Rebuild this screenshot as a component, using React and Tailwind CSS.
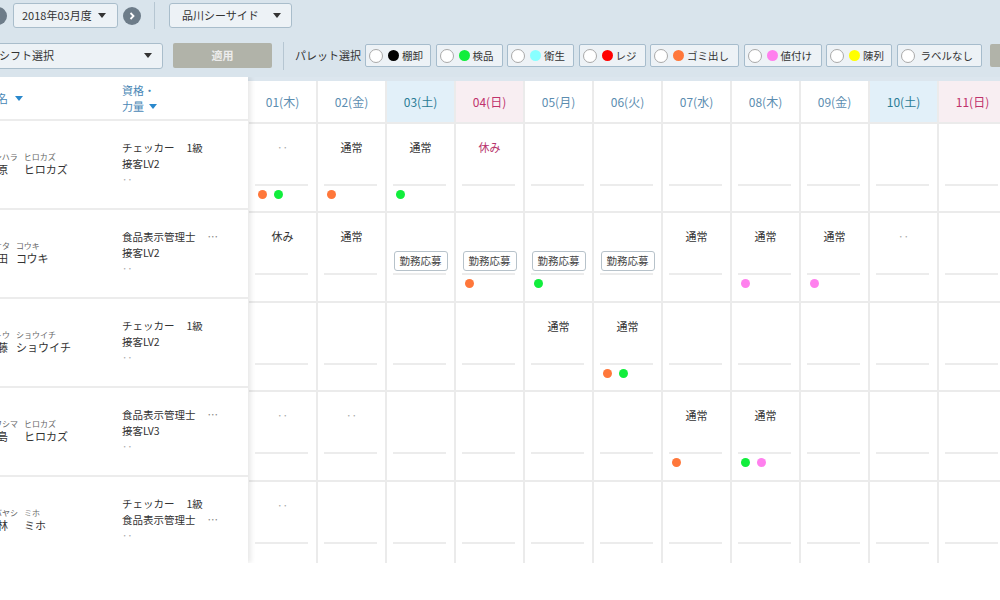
import React from 'react';

const days = [
  { label: '01(木)', kind: 'w' },
  { label: '02(金)', kind: 'w' },
  { label: '03(土)', kind: 'sat' },
  { label: '04(日)', kind: 'sun' },
  { label: '05(月)', kind: 'w' },
  { label: '06(火)', kind: 'w' },
  { label: '07(水)', kind: 'w' },
  { label: '08(木)', kind: 'w' },
  { label: '09(金)', kind: 'w' },
  { label: '10(土)', kind: 'sat' },
  { label: '11(日)', kind: 'sun' },
];

const dayStyle = {
  w: 'text-[#5b8db0] bg-white',
  sat: 'text-[#2b7c96] bg-[#e2f0f9]',
  sun: 'text-[#c0326c] bg-[#f8eef2]',
};

const DOT = {
  o: 'bg-[#ff773a]',
  g: 'bg-[#11ee3c]',
  p: 'bg-[#ff80ee]',
};

const palette = [
  { label: '棚卸', dot: 'bg-black', w: 'w-[66px]' },
  { label: '検品', dot: 'bg-[#11ee3c]', w: 'w-[67px]' },
  { label: '衛生', dot: 'bg-[#88ffff]', w: 'w-[67px]' },
  { label: 'レジ', dot: 'bg-[#ff0000]', w: 'w-[67px]' },
  { label: 'ゴミ出し', dot: 'bg-[#ff773a]', w: 'w-[89px]' },
  { label: '値付け', dot: 'bg-[#ff80ee]', w: 'w-[78px]' },
  { label: '陳列', dot: 'bg-[#ffff00]', w: 'w-[66px]' },
  { label: 'ラベルなし', dot: null, w: 'w-[85px]' },
];

const people = [
  { ks: 'イシハラ', km: 'ヒロカズ', s: '石原', m: 'ヒロカズ', q: [['チェッカー', '1級'], ['接客LV2']] },
  { ks: 'オオタ', km: 'コウキ', s: '太田', m: 'コウキ', q: [['食品表示管理士', '…'], ['接客LV2']] },
  { ks: 'サトウ', km: 'ショウイチ', s: '佐藤', m: 'ショウイチ', q: [['チェッカー', '1級'], ['接客LV2']] },
  { ks: 'カワシマ', km: 'ヒロカズ', s: '川島', m: 'ヒロカズ', q: [['食品表示管理士', '…'], ['接客LV3']] },
  { ks: 'コバヤシ', km: 'ミホ', s: '小林', m: 'ミホ', q: [['チェッカー', '1級'], ['食品表示管理士', '…']] },
];

const E = {};
const shifts = [
  {
    h: 'h-[89px]',
    cells: [
      { t: '‥', dots: ['o', 'g'] },
      { t: '通常', dots: ['o'] },
      { t: '通常', dots: ['g'] },
      { t: '休み', sun: true },
      E, E, E, E, E, E, E,
    ],
  },
  {
    h: 'h-[90px]',
    cells: [
      { t: '休み' },
      { t: '通常' },
      { btn: true },
      { btn: true, dots: ['o'] },
      { btn: true, dots: ['g'] },
      { btn: true },
      { t: '通常' },
      { t: '通常', dots: ['p'] },
      { t: '通常', dots: ['p'] },
      { t: '‥' },
      E,
    ],
  },
  {
    h: 'h-[89px]',
    cells: [E, E, E, E, { t: '通常' }, { t: '通常', dots: ['o', 'g'] }, E, E, E, E, E],
  },
  {
    h: 'h-[90px]',
    cells: [
      { t: '‥' },
      { t: '‥' },
      E, E, E, E,
      { t: '通常', dots: ['o'] },
      { t: '通常', dots: ['g', 'p'] },
      E, E, E,
    ],
  },
  {
    h: 'h-[89px]',
    cells: [{ t: '‥' }, E, E, E, E, E, E, E, E, E, E],
  },
];

const Tri = ({ color }) => (
  <span className={`inline-block shrink-0 w-0 h-0 border-l-[4px] border-r-[4px] border-t-[5px] border-l-transparent border-r-transparent ${color}`} />
);

const CircleBtn = ({ dir, className }) => (
  <div className={`w-[18px] h-[18px] rounded-full bg-[#6d7c89] flex items-center justify-center shrink-0 ${className}`}>
    <svg width="8" height="8" viewBox="0 0 8 8">
      {dir === 'right' ? (
        <polyline points="2.5,1 5.5,4 2.5,7" fill="none" stroke="white" strokeWidth="1.8" />
      ) : (
        <polyline points="5.5,1 2.5,4 5.5,7" fill="none" stroke="white" strokeWidth="1.8" />
      )}
    </svg>
  </div>
);

const Cell = ({ cell }) => (
  <div className="w-[69px] shrink-0 h-full border-r-2 border-[#ebebeb] flex flex-col pt-[15px]">
    <div className={`h-[16px] leading-[16px] text-center text-[11px] ${cell.t === '‥' ? 'text-[#aaa]' : cell.sun ? 'text-[#b8346c]' : 'text-[#333]'}`}>
      {cell.t || ''}
    </div>
    <div className="h-[20px] mt-[7px] flex justify-center">
      {cell.btn && (
        <div className="w-[54px] h-[20px] border border-[#b7c2ca] rounded-[3px] bg-white text-[10.5px] leading-[18px] text-center text-[#444]">
          勤務応募
        </div>
      )}
    </div>
    <div className="mt-[2px] ml-[6px] mr-[8px] h-[2px] bg-[#ececec]" />
    <div className="mt-[4px] ml-[9px] h-[9px] flex gap-[7px]">
      {(cell.dots || []).map((d, i) => (
        <span key={i} className={`w-[9px] h-[9px] rounded-full ${DOT[d]}`} />
      ))}
    </div>
  </div>
);

export default function App() {
  return (
    <div className="w-[1000px] h-[600px] overflow-hidden bg-white font-['Noto_Sans_CJK_JP',sans-serif] text-[#333]">
      {/* Top bar */}
      <div className="h-[77px] bg-[#d9e4ec] pt-[3px]">
        <div className="flex items-center h-[25px]">
          <CircleBtn dir="left" className="ml-[-11px]" />
          <div className="ml-[6px] shrink-0 w-[105px] h-[25px] bg-[#edf2f6] border border-[#a9bdcb] rounded-[3px] flex items-center pl-[8px] pr-[11px] justify-between">
            <span className="text-[11px] whitespace-nowrap">2018年03月度</span>
            <Tri color="border-t-[#333]" />
          </div>
          <CircleBtn dir="right" className="ml-[5px]" />
          <div className="ml-[13px] shrink-0 w-px h-[27px] bg-[#b6c6d2]" />
          <div className="ml-[14px] shrink-0 w-[123px] h-[25px] bg-[#edf2f6] border border-[#a9bdcb] rounded-[3px] flex items-center pl-[12px] pr-[10px] justify-between">
            <span className="text-[11px] whitespace-nowrap">品川シーサイド</span>
            <Tri color="border-t-[#333]" />
          </div>
        </div>

        <div className="flex items-center h-[27px] mt-[14px]">
          <div className="ml-[-10px] shrink-0 w-[173px] h-[26px] bg-[#edf2f6] border border-[#a9bdcb] rounded-[3px] flex items-center pl-[8px] pr-[10px] justify-between">
            <span className="text-[11px] whitespace-nowrap">シフト選択</span>
            <Tri color="border-t-[#333]" />
          </div>
          <div className="ml-[10px] shrink-0 w-[99px] h-[25px] bg-[#b1b3a9] rounded-[2px] flex items-center justify-center text-[11px] font-bold text-[#ececec]">
            適用
          </div>
          <div className="ml-[11px] shrink-0 w-px h-[28px] bg-[#b6c6d2]" />
          <span className="ml-[11px] shrink-0 text-[11px] whitespace-nowrap">パレット選択</span>
          <div className="ml-[4px] shrink-0 flex items-center gap-[4.5px]">
            {palette.map((p) => (
              <div
                key={p.label}
                className={`${p.w} shrink-0 h-[23px] bg-[#edf2f6] border border-[#a6bccc] rounded-[2px] flex items-center pl-[3px]`}
              >
                <span className="w-[14px] h-[14px] rounded-full bg-white border border-[#a9a9a9] shrink-0" />
                {p.dot && <span className={`ml-[5px] w-[11px] h-[11px] rounded-full shrink-0 ${p.dot}`} />}
                <span className={`${p.dot ? 'ml-[3px]' : 'ml-[6px]'} text-[10.5px] whitespace-nowrap`}>{p.label}</span>
              </div>
            ))}
            <div className="ml-[4px] w-[20px] h-[23px] bg-[#b1b3a9] rounded-[2px] shrink-0" />
          </div>
        </div>
      </div>

      {/* Content */}
      <div className="flex h-[486px] overflow-hidden">
        {/* Staff column */}
        <div className="w-[248px] shrink-0 bg-white relative z-10 shadow-[3px_0_5px_rgba(0,0,0,0.09)]">
          <div className="h-[44px] border-b-2 border-[#ececec] flex">
            <div className="ml-[-14px] shrink-0 w-[136px] pt-[13px] flex items-center h-[29px] gap-[7px]">
              <span className="text-[11px] text-[#4a88b6] whitespace-nowrap">氏名</span>
              <Tri color="border-t-[#2a88cc]" />
            </div>
            <div className="pt-[5px] text-[11px] leading-[16px] text-[#4a88b6]">
              <div>資格・</div>
              <div className="flex items-center gap-[5px]">
                <span>力量</span>
                <Tri color="border-t-[#2a88cc]" />
              </div>
            </div>
          </div>
          {people.map((p, i) => (
            <div key={i} className="h-[89px] border-b-2 border-[#ececec] flex">
              <div className="ml-[-14px] shrink-0 w-[136px] pt-[31px] flex gap-[6px]">
                <div className="flex flex-col">
                  <span className="text-[8px] leading-[10px] text-[#666] whitespace-nowrap">{p.ks}</span>
                  <span className="text-[11px] leading-[14px] whitespace-nowrap">{p.s}</span>
                </div>
                <div className="flex flex-col">
                  <span className="text-[8px] leading-[10px] text-[#666] whitespace-nowrap">{p.km}</span>
                  <span className="text-[11px] leading-[14px] whitespace-nowrap">{p.m}</span>
                </div>
              </div>
              <div className="pt-[19px] text-[10.5px] leading-[16px]">
                {p.q.map((q, j) => (
                  <div key={j} className="flex whitespace-nowrap">
                    <span>{q[0]}</span>
                    {q[1] && (
                      <span className={`ml-[12px] ${q[1] === '…' ? 'text-[#888]' : ''}`}>{q[1]}</span>
                    )}
                  </div>
                ))}
                <div className="text-[#aaa]">‥</div>
              </div>
            </div>
          ))}
        </div>

        {/* Schedule grid */}
        <div className="flex-1 overflow-hidden flex flex-col">
          <div className="h-[4px] bg-[#dce6ee] shrink-0" />
          <div className="ml-[1px] w-[759px]">
            <div className="h-[43px] flex border-b-2 border-[#ebebeb]">
              {days.map((d) => (
                <div
                  key={d.label}
                  className={`w-[69px] shrink-0 h-full border-r-2 border-[#ebebeb] flex items-center justify-center text-[12px] ${dayStyle[d.kind]}`}
                >
                  {d.label}
                </div>
              ))}
            </div>
            {shifts.map((row, i) => (
              <div key={i} className={`${row.h} flex border-b-2 border-[#ebebeb]`}>
                {row.cells.map((c, j) => (
                  <Cell key={j} cell={c} />
                ))}
              </div>
            ))}
          </div>
        </div>
      </div>
    </div>
  );
}
